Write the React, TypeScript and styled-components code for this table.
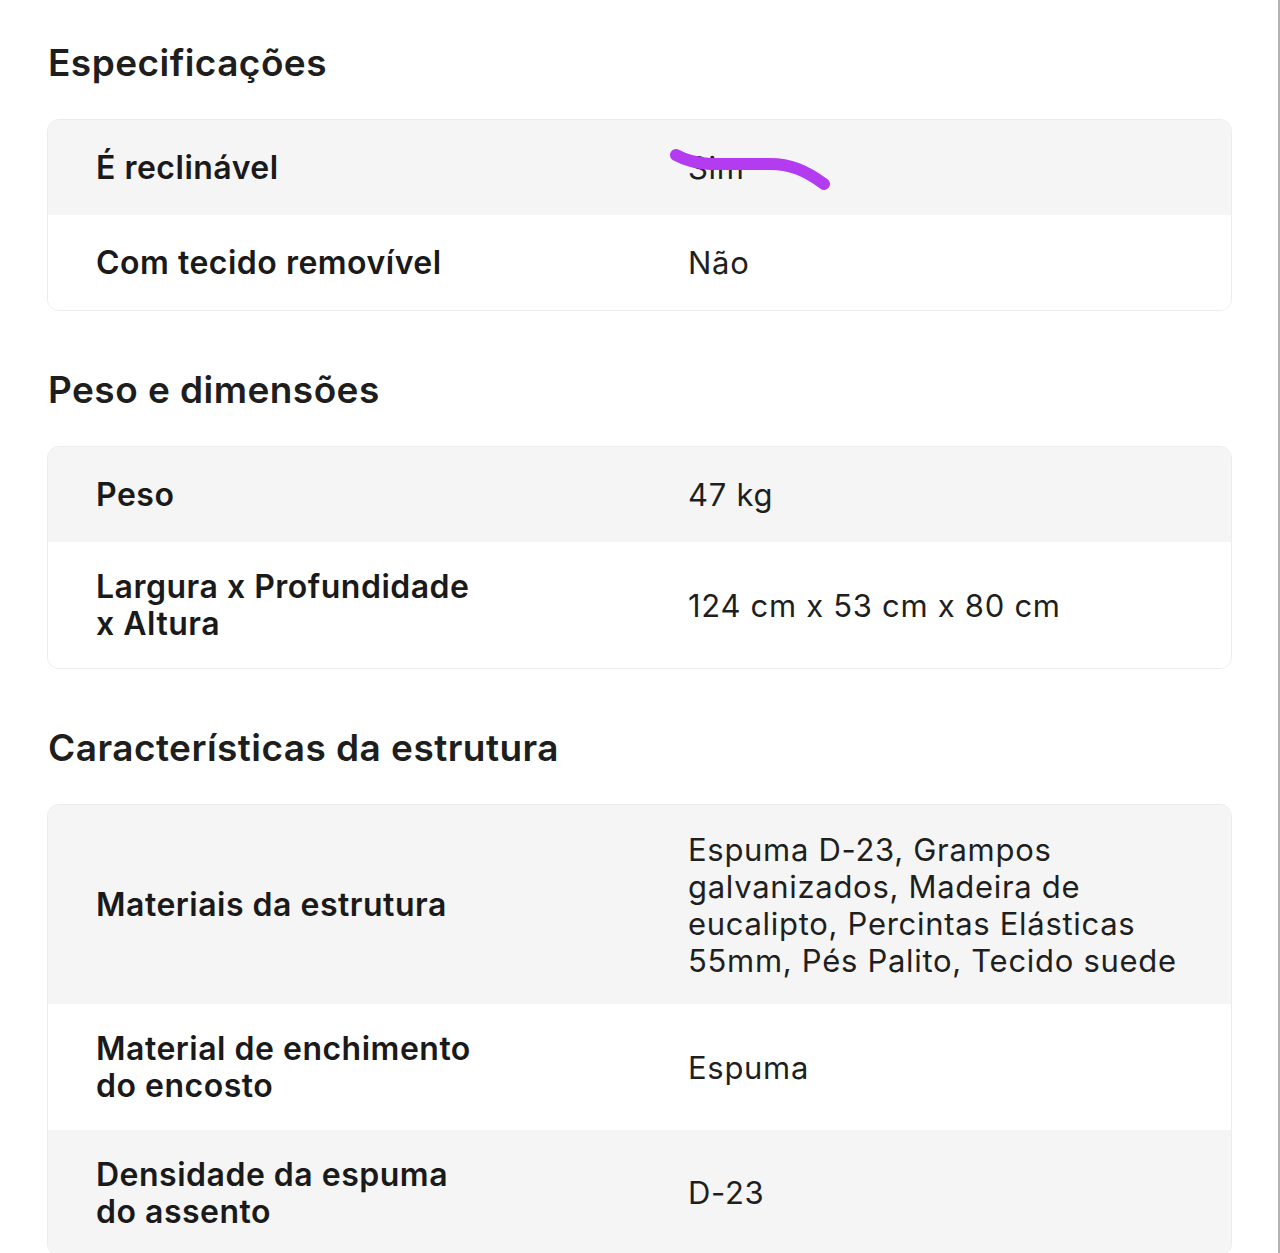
import React from "react";
import styled, { createGlobalStyle } from "styled-components";

const GlobalStyle = createGlobalStyle`
  html, body {
    margin: 0;
    padding: 0;
    background: #ffffff;
  }
  body {
    font-family: "Inter", "Liberation Sans", sans-serif;
    color: #1c1c1c;
    -webkit-font-smoothing: antialiased;
  }
`;

const Page = styled.div`
  box-sizing: border-box;
  width: 1280px;
  min-height: 1253px;
  padding: 40px 46px 0 47px;
  border-right: 2px solid #b4b4b4;
`;

const Section = styled.section`
  & + & {
    margin-top: 56px;
  }
`;

const Heading = styled.h2`
  margin: 0 0 33px 1px;
  font-size: 37px;
  line-height: 46px;
  font-weight: 600;
  color: #1e1e1e;
  letter-spacing: 0.45px;
`;

const Table = styled.div`
  border: 1px solid #ececec;
  border-radius: 12px;
  overflow: hidden;
`;

const Row = styled.div<{ $shaded: boolean }>`
  box-sizing: border-box;
  display: grid;
  grid-template-columns: 592px 1fr;
  align-items: center;
  min-height: 95px;
  padding: 26px 47px 25.5px 48px;
  background: ${(p) => (p.$shaded ? "#f5f5f5" : "#ffffff")};
`;

const Label = styled.div`
  max-width: 390px;
  font-size: 32px;
  line-height: 37px;
  font-weight: 600;
  letter-spacing: 0.5px;
  color: #1a1a1a;
`;

const Value = styled.div`
  position: relative;
  font-size: 31px;
  line-height: 37px;
  font-weight: 400;
  letter-spacing: 0.7px;
  color: #1f1f1f;
`;

const Scribble = styled.svg`
  position: absolute;
  left: -18px;
  top: -1px;
  width: 170px;
  height: 45px;
  overflow: visible;
  pointer-events: none;
`;

type Spec = { label: string; value: string; scribble?: boolean };

const sections: { title: string; rows: Spec[] }[] = [
  {
    title: "Especificações",
    rows: [
      { label: "É reclinável", value: "Sim", scribble: true },
      { label: "Com tecido removível", value: "Não" },
    ],
  },
  {
    title: "Peso e dimensões",
    rows: [
      { label: "Peso", value: "47 kg" },
      { label: "Largura x Profundidade x Altura", value: "124 cm x 53 cm x 80 cm" },
    ],
  },
  {
    title: "Características da estrutura",
    rows: [
      {
        label: "Materiais da estrutura",
        value:
          "Espuma D-23, Grampos galvanizados, Madeira de eucalipto, Percintas Elásticas 55mm, Pés Palito, Tecido suede",
      },
      { label: "Material de enchimento do encosto", value: "Espuma" },
      { label: "Densidade da espuma do assento", value: "D-23" },
    ],
  },
];

export default function App() {
  return (
    <>
      <GlobalStyle />
      <Page>
        {sections.map((s) => (
          <Section key={s.title}>
            <Heading>{s.title}</Heading>
            <Table>
              {s.rows.map((r, i) => (
                <Row key={r.label} $shaded={i % 2 === 0}>
                  <Label>{r.label}</Label>
                  <Value>
                    {r.value}
                    {r.scribble && (
                      <Scribble viewBox="0 0 170 45">
                        <path
                          d="M6 7 C 15 12, 25 15, 40 16 L 100 16 C 120 16, 135 22, 154 36"
                          fill="none"
                          stroke="#b43cf0"
                          strokeWidth="12"
                          strokeLinecap="round"
                          strokeLinejoin="round"
                        />
                      </Scribble>
                    )}
                  </Value>
                </Row>
              ))}
            </Table>
          </Section>
        ))}
      </Page>
    </>
  );
}
